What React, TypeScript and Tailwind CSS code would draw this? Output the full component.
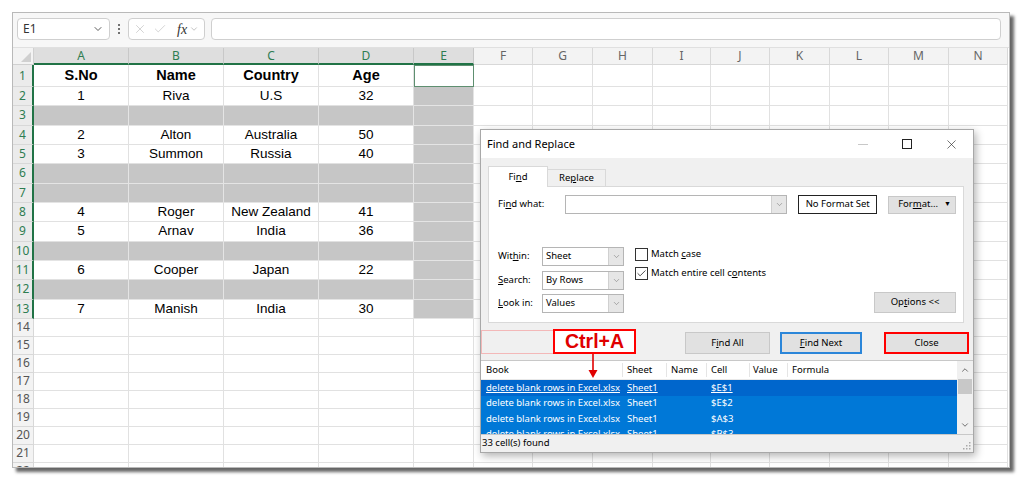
import { Check, ChevronDown, ChevronUp, X } from "lucide-react";

const colW = [
  "w-[95px]",
  "w-[95px]",
  "w-[95px]",
  "w-[95px]",
  "w-[60px]",
  "w-[59px]",
  "w-[60px]",
  "w-[60px]",
  "w-[58px]",
  "w-[59px]",
  "w-[60px]",
  "w-[59px]",
  "w-[60px]",
  "w-[59px]",
];
const letters = "ABCDEFGHIJKLMN".split("");

type Row = { n: number; h: string; v?: string[]; gray?: boolean; bold?: boolean };

const rows: Row[] = [
  { n: 1, h: "h-[22px]", v: ["S.No", "Name", "Country", "Age"], bold: true },
  { n: 2, h: "h-[19.33px]", v: ["1", "Riva", "U.S", "32"] },
  { n: 3, h: "h-[19.33px]", gray: true },
  { n: 4, h: "h-[19.33px]", v: ["2", "Alton", "Australia", "50"] },
  { n: 5, h: "h-[19.33px]", v: ["3", "Summon", "Russia", "40"] },
  { n: 6, h: "h-[19.33px]", gray: true },
  { n: 7, h: "h-[19.33px]", gray: true },
  { n: 8, h: "h-[19.33px]", v: ["4", "Roger", "New Zealand", "41"] },
  { n: 9, h: "h-[19.33px]", v: ["5", "Arnav", "India", "36"] },
  { n: 10, h: "h-[19.33px]", gray: true },
  { n: 11, h: "h-[19.33px]", v: ["6", "Cooper", "Japan", "22"] },
  { n: 12, h: "h-[19.33px]", gray: true },
  { n: 13, h: "h-[19.33px]", v: ["7", "Manish", "India", "30"] },
  ...[14, 15, 16, 17, 18, 19, 20, 21, 22].map((n) => ({ n, h: "h-[18px]" })),
];

const results = ["$E$1", "$E$2", "$A$3", "$B$3"];

function Cell({ row, ci }: { row: Row; ci: number }) {
  const base = "shrink-0 flex items-center justify-center border-r border-b " + colW[ci];
  if (ci === 4 && row.n === 1)
    return <div className={base + " border-[#e1e1e1] bg-white outline outline-1 -outline-offset-1 outline-[#5e8f70]"} />;
  if ((ci < 4 && row.gray) || (ci === 4 && row.n <= 13))
    return <div className={base + " border-[#e4e4e4] bg-[#c6c6c6]"} />;
  return (
    <div className={base + " border-[#e1e1e1] bg-white"}>
      {ci < 4 && row.v ? (
        <span className={row.bold ? "text-[14.5px] font-bold" : "text-[13.5px]"}>{row.v[ci]}</span>
      ) : null}
    </div>
  );
}

function Select({ value }: { value: string }) {
  return (
    <div className="flex h-[19px] w-[82px] items-stretch border border-[#b5b5b5] bg-white">
      <span className="flex flex-1 items-center pl-[3px]">{value}</span>
      <span className="flex w-[15px] items-center justify-center border-l border-[#d0d0d0] bg-[#e6e6e6]">
        <ChevronDown size={9} strokeWidth={1.5} className="text-[#777]" />
      </span>
    </div>
  );
}

export default function App() {
  return (
    <div className="min-h-screen bg-white pl-[12px] pt-[12px] font-['Liberation_Sans',sans-serif] text-black">
      <div className="relative h-[456px] w-[998px] overflow-hidden border border-[#b9b9b9] bg-white shadow-[4px_4px_3px_rgba(0,0,0,0.6)]">
        {/* formula bar */}
        <div className="flex h-[34px] items-start bg-[#f7f7f7] pt-[5px] font-['Noto_Sans',sans-serif] text-[12px] text-[#333]">
          <div className="ml-[4px] flex h-[22px] w-[93px] items-center justify-between rounded-[4px] border border-[#cfcfcf] bg-white pl-[5px] pr-[5px]">
            <span>E1</span>
            <ChevronDown size={12} strokeWidth={1.6} />
          </div>
          <div className="ml-[8px] flex h-[22px] flex-col items-center justify-center gap-[2px]">
            <span className="h-[2px] w-[2px] rounded-full bg-[#444]" />
            <span className="h-[2px] w-[2px] rounded-full bg-[#444]" />
            <span className="h-[2px] w-[2px] rounded-full bg-[#444]" />
          </div>
          <div className="ml-[8px] flex h-[22px] w-[77px] items-center rounded-[4px] border border-[#cfcfcf] bg-white pl-[4px]">
            <X size={14} strokeWidth={1} className="text-[#b5b5b5]" />
            <Check size={14} strokeWidth={1} className="ml-[6px] text-[#b5b5b5]" />
            <span className="ml-[10px] font-['Liberation_Serif',serif] text-[14px] italic text-[#333]">fx</span>
            <ChevronDown size={10} strokeWidth={1.2} className="ml-[2px] text-[#888]" />
          </div>
          <div className="ml-[6px] h-[22px] w-[790px] rounded-[4px] border border-[#cfcfcf] bg-white" />
        </div>

        {/* column headers */}
        <div className="flex h-[18px] border-t border-[#e0e0e0] font-['Noto_Sans',sans-serif] text-[12px]">
          <div className="relative w-[21px] shrink-0 border-r border-b border-[#d0d0d0] bg-[#f3f3f3]">
            <svg className="absolute right-[2px] bottom-[2px]" width="10" height="10" viewBox="0 0 10 10">
              <polygon points="10,0 10,10 0,10" fill="#d0d0d0" />
            </svg>
          </div>
          {letters.map((l, i) =>
            i <= 4 ? (
              <div
                key={l}
                className={"flex shrink-0 items-center justify-center border-r border-[#c8c8c8] border-b-2 border-b-[#217346] bg-[#dedede] text-[#2e7d51] " + colW[i]}
              >
                {l}
              </div>
            ) : (
              <div
                key={l}
                className={"flex shrink-0 items-center justify-center border-r border-b border-[#d8d8d8] bg-[#f3f3f3] text-[#666] " + colW[i]}
              >
                {l}
              </div>
            )
          )}
        </div>

        {/* rows */}
        {rows.map((row) => (
          <div key={row.n} className={"flex " + row.h}>
            {row.n <= 13 ? (
              <div className="flex w-[21px] shrink-0 items-center justify-center border-r-2 border-b border-r-[#217346] border-b-[#d8d8d8] bg-[#ebebeb] font-['Noto_Sans',sans-serif] text-[12px] text-[#2e7d51]">
                {row.n}
              </div>
            ) : (
              <div className="flex w-[21px] shrink-0 items-center justify-center border-r border-b border-[#d8d8d8] bg-[#f3f3f3] font-['Noto_Sans',sans-serif] text-[12px] text-[#555]">
                {row.n}
              </div>
            )}
            {letters.map((l, ci) => (
              <Cell key={l} row={row} ci={ci} />
            ))}
          </div>
        ))}

        {/* Find and Replace dialog */}
        <div className="absolute left-[467px] top-[116px] flex h-[324px] w-[494px] flex-col border border-[#a8a8a8] bg-[#f0f0f0] font-['Noto_Sans',sans-serif] text-[9.5px] text-black shadow-[2px_3px_8px_rgba(0,0,0,0.3)]">
          <div className="flex h-[28px] items-center bg-white pl-[6px]">
            <span className="text-[11px]">Find and Replace</span>
            <div className="ml-auto flex h-full">
              <div className="flex w-[44px] items-center justify-center">
                <span className="h-px w-[10px] bg-[#c8c8c8]" />
              </div>
              <div className="flex w-[44px] items-center justify-center">
                <span className="h-[10px] w-[10px] border border-[#222]" />
              </div>
              <div className="flex w-[44px] items-center justify-center">
                <X size={15} strokeWidth={1} className="text-[#222]" />
              </div>
            </div>
          </div>

          <div className="pl-[7px] pt-[7px]">
            <div className="flex h-[21px] items-end">
              <div className="relative z-10 -mb-px flex h-[21px] w-[60px] items-center justify-center border border-b-0 border-[#d9d9d9] bg-white">
                <span>
                  Fi<u>n</u>d
                </span>
              </div>
              <div className="flex h-[17px] w-[58px] items-center justify-center border border-b-0 border-l-0 border-[#d9d9d9]">
                <span>
                  Re<u>p</u>lace
                </span>
              </div>
            </div>
            <div className="flex h-[137px] w-[476px] flex-col border border-[#d9d9d9] bg-white pl-[9px] pr-[7px] pt-[8px]">
              <div className="flex items-center">
                <span className="w-[67px]">
                  Fi<u>n</u>d what:
                </span>
                <div className="flex h-[19px] w-[223px] border border-[#b5b5b5] bg-white">
                  <span className="flex-1" />
                  <span className="flex w-[15px] items-center justify-center border-l border-[#d0d0d0] bg-[#e6e6e6]">
                    <ChevronDown size={9} strokeWidth={1.5} className="text-[#777]" />
                  </span>
                </div>
                <div className="ml-[11px] flex h-[19px] w-[79px] items-center justify-center border border-[#222]">
                  No Format Set
                </div>
                <div className="ml-[11px] flex h-[18px] w-[68px] items-center border border-[#c8c8c8] bg-[#e1e1e1] pl-[9px] pr-[4px]">
                  <span>
                    For<u>m</u>at...
                  </span>
                  <span className="ml-auto text-[7px]">▼</span>
                </div>
              </div>

              <div className="mt-[33px] flex pb-[9px]">
                <div className="flex flex-col gap-[4.5px]">
                  <div className="flex items-center">
                    <span className="w-[44px]">
                      Wit<u>h</u>in:
                    </span>
                    <Select value="Sheet" />
                  </div>
                  <div className="flex items-center">
                    <span className="w-[44px]">
                      <u>S</u>earch:
                    </span>
                    <Select value="By Rows" />
                  </div>
                  <div className="flex items-center">
                    <span className="w-[44px]">
                      <u>L</u>ook in:
                    </span>
                    <Select value="Values" />
                  </div>
                </div>
                <div className="ml-[11px] flex flex-col gap-[6px] pt-[1px]">
                  <div className="flex h-[13px] items-center">
                    <span className="h-[13px] w-[13px] border border-[#333] bg-white" />
                    <span className="ml-[3px]">
                      Match <u>c</u>ase
                    </span>
                  </div>
                  <div className="flex h-[13px] items-center">
                    <span className="flex h-[13px] w-[13px] items-center justify-center border border-[#333] bg-white">
                      <Check size={11} strokeWidth={1.5} />
                    </span>
                    <span className="ml-[3px]">
                      Match entire cell c<u>o</u>ntents
                    </span>
                  </div>
                </div>
                <div className="ml-auto flex h-[21px] w-[82px] items-center justify-center self-end border border-[#c8c8c8] bg-[#e1e1e1]">
                  <span>
                    Op<u>t</u>ions &lt;&lt;
                  </span>
                </div>
              </div>
            </div>
          </div>

          <div className="mt-[9px] flex h-[22px] justify-end pr-[4px]">
            <div className="flex w-[85px] items-center justify-center border border-[#c8c8c8] bg-[#e1e1e1]">
              <span>
                F<u>i</u>nd All
              </span>
            </div>
            <div className="ml-[10px] flex w-[82px] items-center justify-center border-2 border-[#2b86d9] bg-[#e1e1e1]">
              <span>
                <u>F</u>ind Next
              </span>
            </div>
            <div className="ml-[22px] flex w-[85px] items-center justify-center border-2 border-[#ff0000] bg-[#e1e1e1]">
              <span>Close</span>
            </div>
          </div>

          <div className="mt-[6px] flex h-[75px] border-y border-[#c8c8c8] bg-white">
            <div className="flex flex-1 flex-col">
              <div className="flex h-[19px] items-center border-b border-[#e8e8e8]">
                <span className="w-[142px] border-r border-[#e5e5e5] pl-[5px]">Book</span>
                <span className="w-[44px] border-r border-[#e5e5e5] pl-[4px]">Sheet</span>
                <span className="w-[40px] border-r border-[#e5e5e5] pl-[4px]">Name</span>
                <span className="w-[43px] border-r border-[#e5e5e5] pl-[4px]">Cell</span>
                <span className="w-[38px] border-r border-[#e5e5e5] pl-[3px]">Value</span>
                <span className="pl-[4px]">Formula</span>
              </div>
              <div className="flex flex-1 flex-col overflow-hidden bg-[#0078d7] text-white">
                {results.map((c, i) => (
                  <div
                    key={c}
                    className={
                      i === 0
                        ? "flex h-[15.5px] shrink-0 items-center bg-[#0066cc] underline"
                        : "flex h-[15.5px] shrink-0 items-center"
                    }
                  >
                    <span className="w-[142px] pl-[5px]">delete blank rows in Excel.xlsx</span>
                    <span className="w-[44px] pl-[4px]">Sheet1</span>
                    <span className="w-[40px]" />
                    <span className="w-[43px] pl-[4px]">{c}</span>
                  </div>
                ))}
              </div>
            </div>
            <div className="flex w-[16px] flex-col items-center bg-[#f0f0f0]">
              <div className="flex h-[18px] items-center">
                <ChevronUp size={10} strokeWidth={2} className="text-[#555]" />
              </div>
              <div className="h-[15px] w-[14px] bg-[#c8c8c8]" />
              <div className="flex-1" />
              <div className="flex h-[18px] items-center">
                <ChevronDown size={10} strokeWidth={2} className="text-[#555]" />
              </div>
            </div>
          </div>

          <div className="flex flex-1 items-center justify-between pl-[1px] pr-[2px]">
            <span>33 cell(s) found</span>
            <svg width="8" height="8" viewBox="0 0 8 8" className="self-end mb-[2px]">
              <rect x="6" y="0" width="1.5" height="1.5" fill="#aaa" />
              <rect x="3" y="3" width="1.5" height="1.5" fill="#aaa" />
              <rect x="6" y="3" width="1.5" height="1.5" fill="#aaa" />
              <rect x="0" y="6" width="1.5" height="1.5" fill="#aaa" />
              <rect x="3" y="6" width="1.5" height="1.5" fill="#aaa" />
              <rect x="6" y="6" width="1.5" height="1.5" fill="#aaa" />
            </svg>
          </div>

          {/* Ctrl+A annotation */}
          <div className="absolute left-[0px] top-[200px] h-[24px] w-[155px] border border-[#f3b8b8]" />
          <div className="absolute left-[72px] top-[199px] flex h-[25px] w-[83px] items-center justify-center border-2 border-[#ff0000] bg-white">
            <span className="font-['Liberation_Sans',sans-serif] text-[19.5px] font-bold leading-none text-[#e00000]">Ctrl+A</span>
          </div>
          <svg className="absolute left-[107px] top-[224px]" width="10" height="25" viewBox="0 0 10 25">
            <line x1="5" y1="0" x2="5" y2="17" stroke="#e00000" strokeWidth="1.6" />
            <polygon points="0.5,16 9.5,16 5,24" fill="#e00000" />
          </svg>
        </div>
      </div>
    </div>
  );
}
